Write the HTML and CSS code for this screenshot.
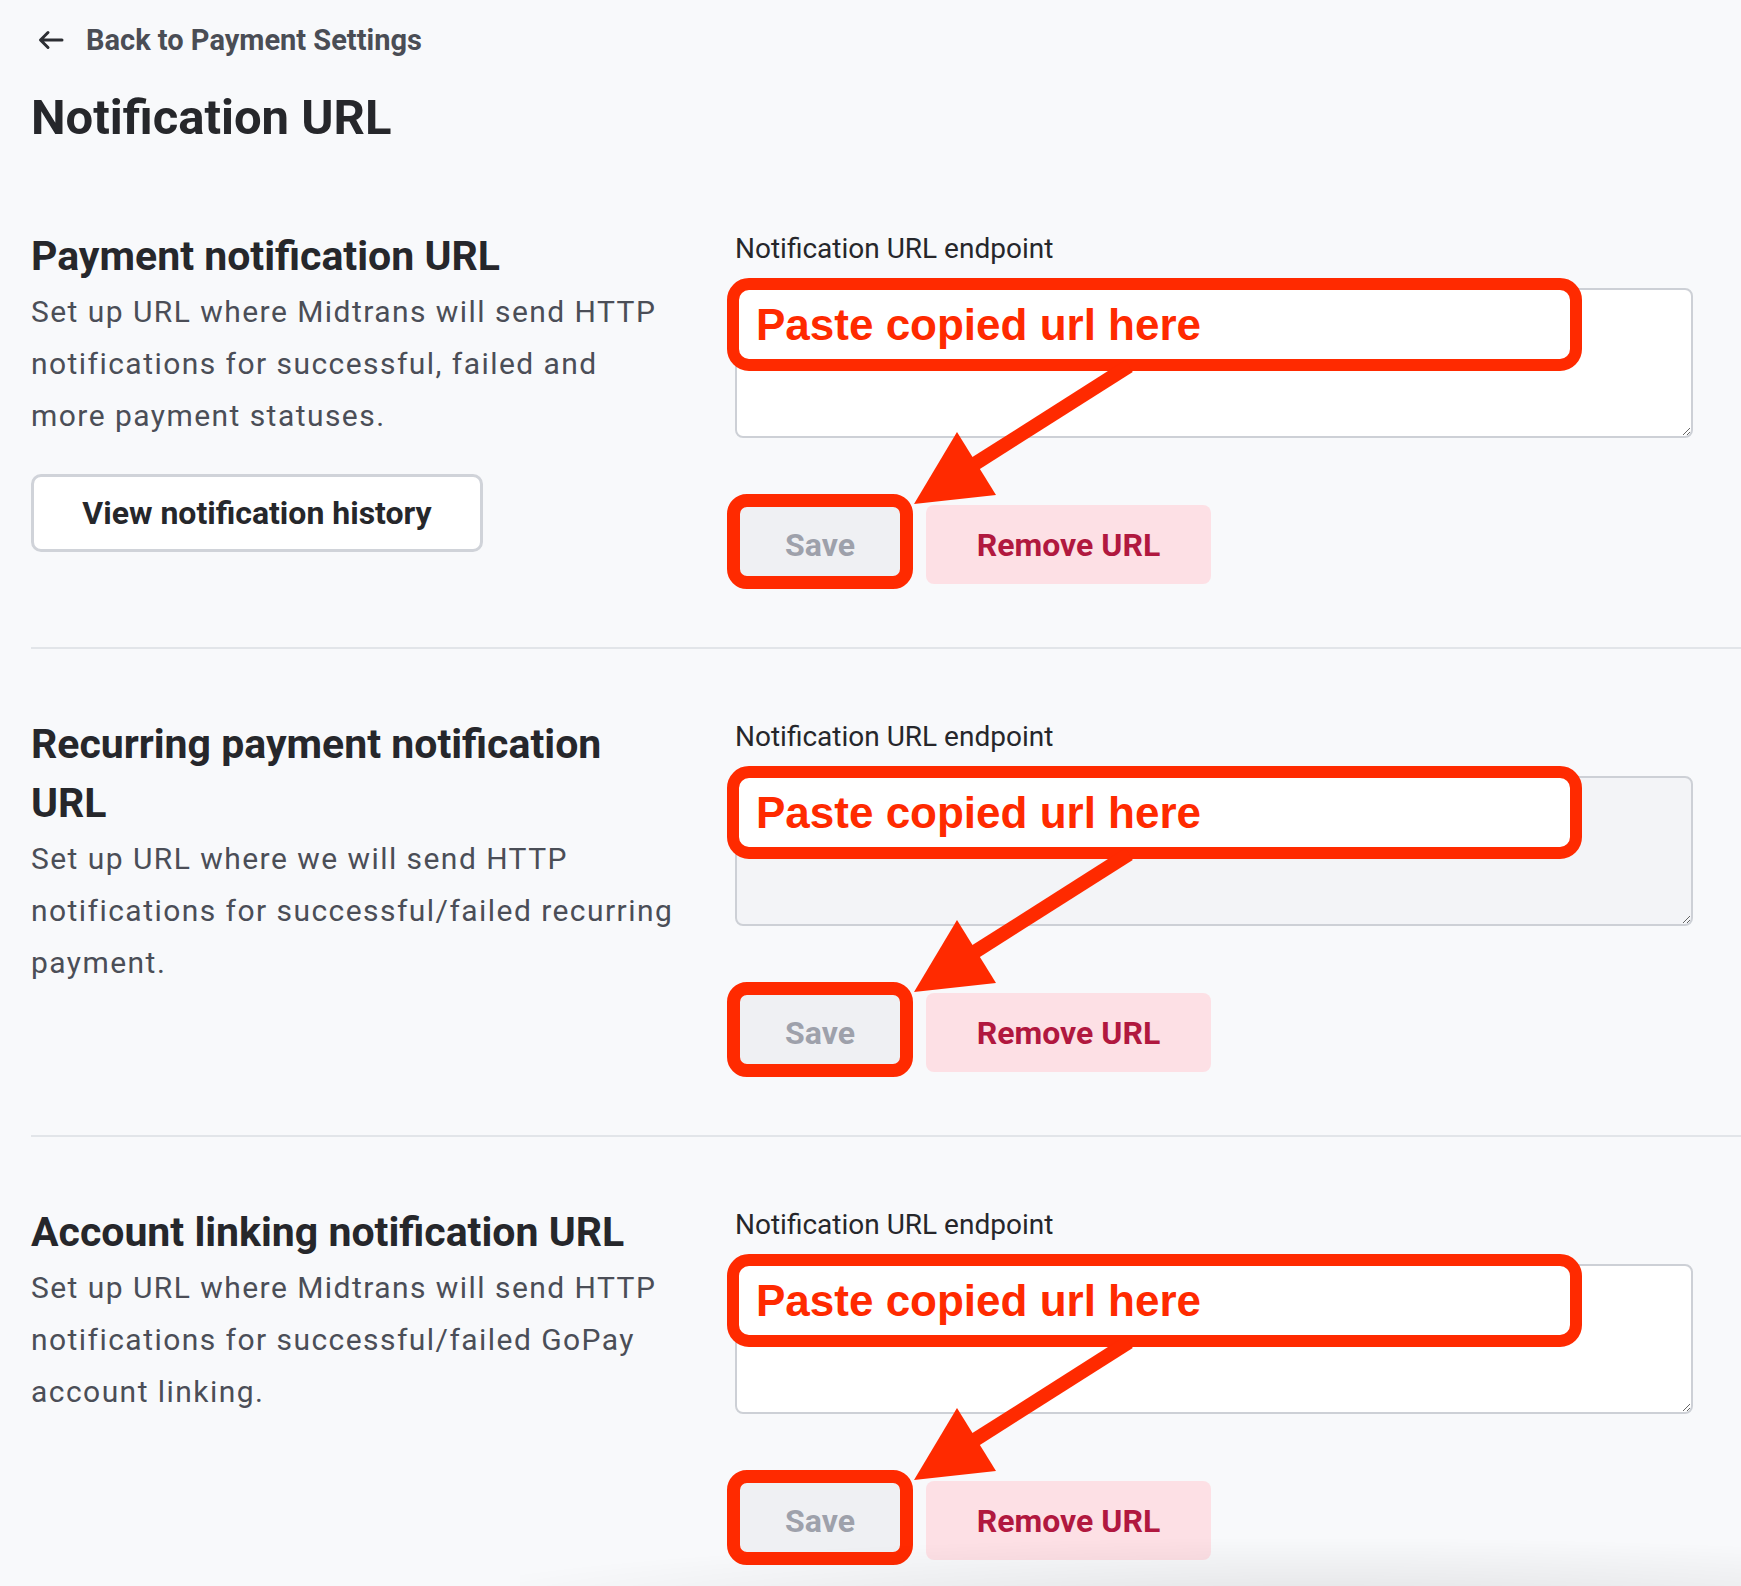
FILE: index.html
```html
<!DOCTYPE html>
<html lang="en">
<head>
<meta charset="utf-8">
<title>Notification URL</title>
<link rel="stylesheet" href="styles.css">
</head>
<body>
<div class="page">
  <a class="back" href="#">
    <svg class="back-icon" width="26" height="20" viewBox="0 0 26 20" aria-hidden="true">
      <path d="M24 10 H3 M10 2.5 L2.5 10 L10 17.5" fill="none" stroke="#2c2e33" stroke-width="3" stroke-linecap="round" stroke-linejoin="round"/>
    </svg>
    <span>Back to Payment Settings</span>
  </a>
  <h1 class="title">Notification URL</h1>

  <section class="section">
    <div class="info">
      <h2 class="heading">Payment notification URL</h2>
      <p class="desc">Set up URL where Midtrans will send HTTP notifications for successful, failed and more payment statuses.</p>
      <button class="btn-outline">View notification history</button>
    </div>
    <div class="form">
      <label class="label">Notification URL endpoint</label>
      <div class="field">
        <textarea class="input"></textarea>
        <div class="actions">
          <button class="btn-save">Save</button>
          <button class="btn-remove">Remove URL</button>
        </div>
        <div class="callout">Paste copied url here</div>
        <svg class="arrow" width="420" height="230" viewBox="0 0 420 230" aria-hidden="true">
          <line x1="394" y1="78" x2="238" y2="177" stroke="#ff2a00" stroke-width="14"/>
          <polygon points="179,216 222,144 261,207" fill="#ff2a00"/>
        </svg>
        <div class="save-ring"></div>
      </div>
    </div>
  </section>

  <section class="section">
    <div class="info">
      <h2 class="heading">Recurring payment notification URL</h2>
      <p class="desc">Set up URL where we will send HTTP notifications for successful/failed recurring payment.</p>
    </div>
    <div class="form">
      <label class="label">Notification URL endpoint</label>
      <div class="field">
        <textarea class="input input-muted"></textarea>
        <div class="actions">
          <button class="btn-save">Save</button>
          <button class="btn-remove">Remove URL</button>
        </div>
        <div class="callout">Paste copied url here</div>
        <svg class="arrow" width="420" height="230" viewBox="0 0 420 230" aria-hidden="true">
          <line x1="394" y1="78" x2="238" y2="177" stroke="#ff2a00" stroke-width="14"/>
          <polygon points="179,216 222,144 261,207" fill="#ff2a00"/>
        </svg>
        <div class="save-ring"></div>
      </div>
    </div>
  </section>

  <section class="section">
    <div class="info">
      <h2 class="heading">Account linking notification URL</h2>
      <p class="desc">Set up URL where Midtrans will send HTTP notifications for successful/failed GoPay account linking.</p>
    </div>
    <div class="form">
      <label class="label">Notification URL endpoint</label>
      <div class="field">
        <textarea class="input"></textarea>
        <div class="actions">
          <button class="btn-save">Save</button>
          <button class="btn-remove">Remove URL</button>
        </div>
        <div class="callout">Paste copied url here</div>
        <svg class="arrow" width="420" height="230" viewBox="0 0 420 230" aria-hidden="true">
          <line x1="394" y1="78" x2="238" y2="177" stroke="#ff2a00" stroke-width="14"/>
          <polygon points="179,216 222,144 261,207" fill="#ff2a00"/>
        </svg>
        <div class="save-ring"></div>
      </div>
    </div>
  </section>
</div>
<div class="bottom-shade"></div>
</body>
</html>
```

FILE: styles.css
```css
html, body {
  margin: 0;
  padding: 0;
  background: #f8f9fb;
}

body {
  font-family: Roboto, "Noto Sans", "Liberation Sans", sans-serif;
  color: #26272b;
}

.page {
  padding: 22px 0 0 31px;
}

.back {
  display: flex;
  align-items: center;
  gap: 22px;
  height: 36px;
  margin-left: 7px;
  font-size: 29px;
  font-weight: 700;
  color: #4a4d55;
  text-decoration: none;
}

.back-icon {
  display: block;
  flex: none;
}

.title {
  margin: 32px 0 15px;
  font-size: 49px;
  line-height: 56px;
  font-weight: 700;
  color: #26272b;
}

.section {
  display: grid;
  grid-template-columns: 645px 958px;
  column-gap: 59px;
  padding: 66px 0 63px;
  border-bottom: 2px solid #e2e5e9;
}

.heading {
  margin: 0;
  font-size: 41px;
  line-height: 59px;
  font-weight: 700;
  color: #26272b;
}

.desc {
  margin: 0;
  font-size: 30px;
  line-height: 52px;
  letter-spacing: 1.45px;
  color: #4b4e57;
}

.btn-outline {
  display: block;
  margin-top: 32px;
  width: 452px;
  height: 78px;
  box-sizing: border-box;
  border: 3px solid #d0d3d9;
  border-radius: 10px;
  background: #ffffff;
  font-family: inherit;
  font-size: 32px;
  font-weight: 700;
  color: #26272b;
}

.form {
  display: flex;
  flex-direction: column;
}

.label {
  display: block;
  margin-top: 2px;
  margin-bottom: 19px;
  font-size: 28px;
  line-height: 40px;
  color: #26272b;
}

.field {
  position: relative;
}

.input {
  display: block;
  width: 958px;
  height: 150px;
  box-sizing: border-box;
  margin: 0;
  border: 2px solid #cdd0d6;
  border-radius: 8px;
  background: #ffffff;
  font-family: inherit;
  font-size: 28px;
}

.input-muted {
  background: #f3f4f7;
}

.actions {
  display: flex;
  gap: 21px;
  margin-top: 67px;
}

.btn-save,
.btn-remove {
  height: 79px;
  border: none;
  border-radius: 8px;
  font-family: inherit;
  font-size: 32px;
  font-weight: 700;
}

.btn-save {
  width: 170px;
  background: #eff0f3;
  color: #9ea1ab;
}

.btn-remove {
  width: 285px;
  background: #fde0e5;
  color: #b1183f;
}

.callout {
  position: absolute;
  left: -8px;
  top: -10px;
  width: 855px;
  height: 93px;
  box-sizing: border-box;
  border: 12px solid #ff2a00;
  border-radius: 22px;
  background: #ffffff;
  display: flex;
  align-items: center;
  padding-left: 17px;
  font-family: "Liberation Sans", Arial, sans-serif;
  font-size: 44px;
  font-weight: 700;
  color: #ff2a00;
}

.arrow {
  position: absolute;
  left: 0;
  top: 0;
  overflow: visible;
}

.save-ring {
  position: absolute;
  left: -8px;
  top: 206px;
  width: 186px;
  height: 95px;
  box-sizing: border-box;
  border: 13px solid #ff2a00;
  border-radius: 20px;
}

.bottom-shade {
  position: fixed;
  left: 520px;
  right: 0;
  bottom: 0;
  height: 70px;
  pointer-events: none;
  background: radial-gradient(ellipse 75% 100% at 65% 130%, rgba(0, 0, 0, 0.09), rgba(0, 0, 0, 0) 100%);
}
```
